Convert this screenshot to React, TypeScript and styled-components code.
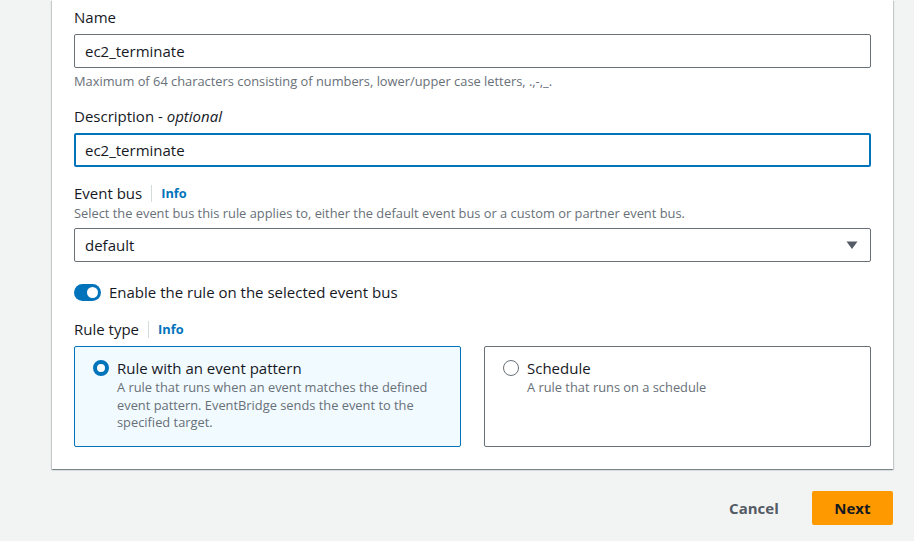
import styled, { createGlobalStyle } from "styled-components";

const GlobalStyle = createGlobalStyle`
  body {
    margin: 0;
    background: #f2f3f3;
    font-family: "Open Sans", "Noto Sans", sans-serif;
    color: #16191f;
  }
  * { box-sizing: border-box; }
`;

const Page = styled.div`
  padding: 0 21px 0 52px;
  width: 914px;
  height: 541px;
  overflow: hidden;
`;

const Container = styled.div`
  background: #fff;
  padding: 6px 22px 22px 22px;
  box-shadow: 0 1px 1px 0 rgba(0, 28, 36, 0.3),
    1px 1px 1px 0 rgba(0, 28, 36, 0.15), -1px 1px 1px 0 rgba(0, 28, 36, 0.15);
`;

const Field = styled.div`
  margin-bottom: 15px;
`;

const LabelRow = styled.div`
  display: flex;
  align-items: center;
  font-size: 15px;
  line-height: 22px;
  margin-bottom: 6px;
`;

const Label = styled.span`
  color: #16191f;
`;

const Optional = styled.i`
  font-style: italic;
`;

const Divider = styled.span`
  width: 1px;
  height: 17px;
  background: #d5dbdb;
  margin: 0 9px;
`;

const InfoLink = styled.a`
  color: #0073bb;
  font-weight: 700;
  font-size: 12.8px;
  text-decoration: none;
`;

const Hint = styled.div<{ $above?: boolean }>`
  font-size: 12.85px;
  line-height: ${(p) => (p.$above ? "16px" : "17px")};
  color: #687078;
  margin: ${(p) => (p.$above ? "-5px 0 7px" : "5px 0 0")};
`;

const Input = styled.div<{ $focus?: boolean }>`
  height: 34px;
  border: ${(p) => (p.$focus ? "2px solid #0073bb" : "1px solid #687078")};
  border-radius: 2px;
  padding: 0 ${(p) => (p.$focus ? "9px" : "10px")};
  display: flex;
  align-items: center;
  font-size: 15px;
  color: #16191f;
  background: #fff;
`;

const Select = styled(Input)`
  justify-content: space-between;
  padding-right: 12px;
`;

const Toggle = styled.div`
  display: flex;
  align-items: center;
  gap: 8px;
  font-size: 15px;
  line-height: 22px;
  margin: 19px 0 15px;
`;

const Switch = styled.span`
  width: 27px;
  height: 17px;
  border-radius: 9px;
  background: #0073bb;
  position: relative;
  &::after {
    content: "";
    position: absolute;
    right: 3px;
    top: 3px;
    width: 11px;
    height: 11px;
    border-radius: 50%;
    background: #fff;
  }
`;

const Tiles = styled.div`
  display: grid;
  grid-template-columns: 1fr 1fr;
  gap: 23px;
`;

const Tile = styled.div<{ $selected?: boolean }>`
  height: 101px;
  border: 1px solid ${(p) => (p.$selected ? "#0073bb" : "#687078")};
  background: ${(p) => (p.$selected ? "#f1faff" : "#fff")};
  border-radius: 2px;
  padding: 10px 20px 10px 18px;
  display: flex;
  gap: 8px;
`;

const Radio = styled.span<{ $checked?: boolean }>`
  flex: none;
  width: 16px;
  height: 16px;
  margin-top: 3px;
  border-radius: 50%;
  border: ${(p) => (p.$checked ? "4px solid #0073bb" : "1.5px solid #687078")};
  background: #fff;
`;

const TileTitle = styled.div`
  font-size: 15px;
  line-height: 22px;
`;

const TileText = styled.div`
  font-size: 12.85px;
  line-height: 17.5px;
  color: #687078;
`;

const Actions = styled.div`
  display: flex;
  justify-content: flex-end;
  align-items: center;
  gap: 13px;
  margin-top: 22px;
`;

const Button = styled.button<{ $primary?: boolean }>`
  font-family: inherit;
  font-size: 15px;
  font-weight: 700;
  height: 34px;
  padding: 0 ${(p) => (p.$primary ? "22.5px" : "20px")};
  border-radius: 2px;
  border: none;
  background: ${(p) => (p.$primary ? "#ff9900" : "transparent")};
  color: ${(p) => (p.$primary ? "#16191f" : "#545b64")};
`;

export default function App() {
  return (
    <Page>
      <GlobalStyle />
      <Container>
        <Field>
          <LabelRow>
            <Label>Name</Label>
          </LabelRow>
          <Input>ec2_terminate</Input>
          <Hint>
            Maximum of 64 characters consisting of numbers, lower/upper case
            letters, .,-,_.
          </Hint>
        </Field>
        <Field>
          <LabelRow>
            <Label>
              Description - <Optional>optional</Optional>
            </Label>
          </LabelRow>
          <Input $focus>ec2_terminate</Input>
        </Field>
        <div>
          <LabelRow>
            <Label>Event bus</Label>
            <Divider />
            <InfoLink>Info</InfoLink>
          </LabelRow>
          <Hint $above>
            Select the event bus this rule applies to, either the default event
            bus or a custom or partner event bus.
          </Hint>
          <Select>
            default
            <svg width="12" height="10" viewBox="0 0 12 10">
              <path d="M0.5 1.5h11L6 9z" fill="#545b64" />
            </svg>
          </Select>
        </div>
        <Toggle>
          <Switch />
          Enable the rule on the selected event bus
        </Toggle>
        <LabelRow>
          <Label>Rule type</Label>
          <Divider />
          <InfoLink>Info</InfoLink>
        </LabelRow>
        <Tiles>
          <Tile $selected>
            <Radio $checked />
            <div>
              <TileTitle>Rule with an event pattern</TileTitle>
              <TileText>
                A rule that runs when an event matches the defined event
                pattern. EventBridge sends the event to the specified target.
              </TileText>
            </div>
          </Tile>
          <Tile>
            <Radio />
            <div>
              <TileTitle>Schedule</TileTitle>
              <TileText>A rule that runs on a schedule</TileText>
            </div>
          </Tile>
        </Tiles>
      </Container>
      <Actions>
        <Button>Cancel</Button>
        <Button $primary>Next</Button>
      </Actions>
    </Page>
  );
}
